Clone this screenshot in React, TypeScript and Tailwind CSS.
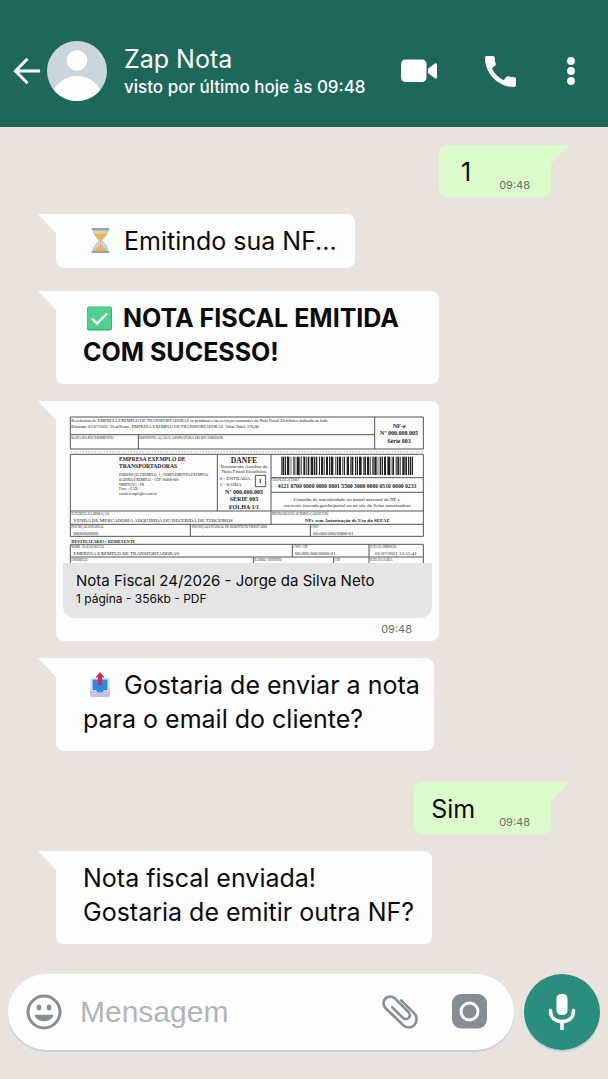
import type { ReactNode } from 'react';

// ---------- icons ----------

function BackIcon() {
  return (
    <svg viewBox="0 0 28 28" className="h-7 w-7" fill="none" stroke="currentColor" strokeWidth="3">
      <path d="M27 14H3M14.5 1.8L2.5 14l12 12.2" />
    </svg>
  );
}

function Avatar() {
  return (
    <svg viewBox="0 0 60 60" className="h-15 w-15 shrink-0" aria-hidden="true">
      <defs>
        <clipPath id="avatar">
          <circle cx="30" cy="30" r="30" />
        </clipPath>
      </defs>
      <g clipPath="url(#avatar)">
        <rect width="60" height="60" fill="#cbd5dd" />
        <circle cx="30" cy="19.5" r="10.3" fill="#fff" />
        <circle cx="30" cy="62" r="27" fill="#fff" />
      </g>
    </svg>
  );
}

function VideoIcon() {
  return (
    <svg viewBox="0 0 36 24" className="h-6 w-9" fill="currentColor">
      <rect x="0" y="0.5" width="25.500" height="22.500" rx="4.500" />
      <path d="M27 9.800 33.500 4.700Q36 3.300 36 5.800V18Q36 20.500 33.500 18.900L27 14Z" />
    </svg>
  );
}

function PhoneIcon() {
  return (
    <svg viewBox="3 3 18 18" className="h-[31px] w-[31px]" fill="currentColor">
      <path d="M20.010 15.380c-1.230 0-2.420-.2-3.530-.56-.35-.12-.74-.03-1.010.24l-1.570 1.970c-2.830-1.350-5.480-3.900-6.890-6.830l1.950-1.660c.27-.28.35-.67.24-1.020-.37-1.110-.56-2.300-.56-3.530 0-.54-.45-.99-.99-.99H4.190C3.650 3 3 3.240 3 3.990 3 13.280 10.730 21 20.010 21c.71 0 .99-.63.99-1.180v-3.450c0-.54-.45-.99-.99-.99z" />
    </svg>
  );
}

function DotsIcon() {
  return (
    <svg viewBox="0 0 8 28" className="h-7 w-2" fill="currentColor">
      <circle cx="4" cy="4" r="3.9" />
      <circle cx="4" cy="14" r="3.9" />
      <circle cx="4" cy="24" r="3.9" />
    </svg>
  );
}

function SmileIcon() {
  return (
    <svg viewBox="0 0 36 36" className="h-9 w-9" fill="#848e94">
      <circle cx="18" cy="18" r="16" fill="none" stroke="#848e94" strokeWidth="3" />
      <ellipse cx="13" cy="13.500" rx="2.300" ry="3" />
      <ellipse cx="23" cy="13.500" rx="2.300" ry="3" />
      <path d="M8.500 20.800H27.500C26.500 24.800 22.700 27.200 18 27.200S9.500 24.800 8.500 20.800Z" />
    </svg>
  );
}

function ClipIcon() {
  return (
    <svg viewBox="0 0 36 34" className="h-[34px] w-9" fill="none" stroke="#848e94" strokeWidth="2.600" strokeLinecap="round" strokeLinejoin="round">
      <path d="M19.200 5.300 32.300 18.400C35.300 21.400 35.300 27 32.300 30.200 29.300 33.200 24.200 33.200 21.200 30.200L3.600 13.200C.8 10.500.8 6.200 3.400 3.500 6 .8 10.200.8 12.800 3.400L26.300 16.800C28.200 18.700 28.200 21.300 26.600 22.900 24.900 24.500 22.500 24.500 20.700 22.700L10.300 12.400" />
    </svg>
  );
}

function CameraIcon() {
  return (
    <svg viewBox="0 0 35 37" className="h-[37px] w-[35px]">
      <rect width="35" height="34.500" rx="9" fill="#848e94" />
      <circle cx="17.500" cy="17.500" r="8.500" fill="none" stroke="#fff" strokeWidth="3" />
    </svg>
  );
}

function MicIcon() {
  return (
    <svg viewBox="0 0 28 36" className="h-9 w-7" fill="none" stroke="#fff" strokeWidth="3.600" strokeLinecap="round">
      <rect x="8.500" y="0" width="11" height="21" rx="4.500" fill="#fff" stroke="none" />
      <path d="M2.500 16.500C2.500 24 7.500 27.500 14 27.500S25.500 24 25.500 16.500M14 28V34.500" />
    </svg>
  );
}

// ---------- emoji ----------

function Hourglass() {
  return (
    <svg viewBox="0 0 27 27" className="mr-[10px] ml-1 inline-block h-[27px] w-[27px] align-[-4px]">
      <path d="M6.500 3H20.500C20.500 9 16 11 15 13.500 16 16 20.500 18 20.500 24H6.500C6.500 18 11 16 12 13.500 11 11 6.500 9 6.500 3Z" fill="#b7dcf6" stroke="#8fb8dc" strokeWidth=".8" />
      <path d="M7.500 5.500H19.500C18.800 9.500 15 11 14 13.500H13C12 11 8.200 9.500 7.500 5.500Z" fill="#f3b544" />
      <ellipse cx="13.500" cy="5.600" rx="6" ry="1.300" fill="#ffd66b" />
      <path d="M13 13H14V20H13Z" fill="#f5ab30" />
      <path d="M7.500 24C8.500 20.500 11 19 13.500 18.500 16 19 18.500 20.500 19.500 24Z" fill="#f7ae62" />
      <rect x="4.500" y="1" width="18" height="2.200" rx="1" fill="#97a1ae" />
      <rect x="4.500" y="23.800" width="18" height="2.200" rx="1" fill="#97a1ae" />
    </svg>
  );
}

function CheckMark() {
  return (
    <svg viewBox="0 0 27 27" className="mr-[9px] ml-1 inline-block h-[27px] w-[27px] align-[-5px]">
      <rect x="0" y="1.500" width="25" height="24" rx="2" fill="#35b273" />
      <rect x="0.500" y="2" width="23.500" height="22" rx="2" fill="#51d28c" />
      <path d="M5 13.500 10 18.500 20 8.500" fill="none" stroke="#fff" strokeWidth="2.400" />
    </svg>
  );
}

function Outbox() {
  return (
    <svg viewBox="0 0 27 27" className="mr-[10px] ml-1 inline-block h-[27px] w-[27px] align-[-4px]">
      <path d="M5.500 7H20.500L23 20V24.500Q23 26 21.500 26H4.500Q3 26 3 24.500V20Z" fill="#c3b4dd" />
      <rect x="3.500" y="6.500" width="19" height="16" rx="2" fill="#d7e6f2" />
      <path d="M5.500 8.500H20.500V19H17L15.500 21.500H10.500L9 19H5.500Z" fill="#3288dc" />
      <path d="M3 19.500H9L10.500 22H15.500L17 19.500H23V24.500Q23 26 21.500 26H4.500Q3 26 3 24.500Z" fill="#cbbce2" />
      <path d="M13 1 17.500 6.500H15V14H11V6.500H8.500Z" fill="#d62457" />
    </svg>
  );
}

// ---------- invoice thumbnail ----------

const bars = [
  2, 2, 6, 2, 3, 3, 7, 4, 2, 6, 4, 3, 2, 2, 8, 3, 3, 5, 6, 2, 2, 3, 5, 4, 8, 2, 3, 2, 5, 5, 3, 3, 7, 2, 2, 4,
  6, 3, 3, 2, 8, 5, 2, 3, 5, 2, 6, 4, 3, 2, 3, 5, 7, 3, 2, 2, 6, 5, 4, 2, 3, 3, 8, 4, 2, 2, 5, 3, 6, 2, 3, 5,
  4, 2, 7, 3, 2, 4, 5, 2, 3, 3, 6, 4, 8, 2, 2, 3, 5, 5, 3, 2, 6, 3, 2, 4, 7, 2, 5, 3, 4, 2, 3, 2, 4,
];

function Barcode() {
  let x = 654;
  return (
    <g fill="#222">
      {bars.map((w, i) => {
        const left = x;
        x += w;
        return i % 2 === 0 && x < 1052 ? <rect key={i} x={left} y="131" width={w} height="55" /> : null;
      })}
    </g>
  );
}

function Danfe() {
  return (
    <svg viewBox="0 0 1107 450" className="block w-full font-['Liberation_Serif',serif]" fill="#222">
      <g fill="none" stroke="#555" strokeWidth="3">
        <path d="M22 12H1081V108H22ZM22 65H935M935 12V108M226 65V108" />
        <path d="M22 117H1081" strokeDasharray="5 4" strokeWidth="2" stroke="#999" />
        <path d="M22 124H1081V370H22ZM22 294H1081M22 334H1081M463 124V294M624 124V334M624 194H1081M624 238H1081M382 334V370M742 334V370" />
        <path d="M22 450V394H1081V450M22 432H1081M688 394V432M918 394V450M571 432V450M812 432V450" />
        <path d="M577 187H608V221H577Z" />
      </g>
      <Barcode />

      <g fontSize="13">
        <text x="25" y="27">Recebemos de EMPRESA EXEMPLO DE TRANSPORTADORAS os produtos e/ou serviços constantes da Nota Fiscal Eletrônica indicada ao lado.</text>
        <text x="25" y="44">Emissão: 01/07/2021 &nbsp;Dest/Reme: EMPRESA EXEMPLO DE TRANSPORTADORAS &nbsp;Valor Total: 570,00</text>
      </g>
      <g fontSize="11">
        <text x="25" y="79">DATA DO RECEBIMENTO</text>
        <text x="229" y="79">IDENTIFICAÇÃO E ASSINATURA DO RECEBEDOR</text>
        <text x="168" y="190">ENDEREÇO EXEMPLO, 1, COMPLEMENTO EXEMPLO</text>
        <text x="168" y="204">BAIRRO EXEMPLO - CEP: 00000-000</text>
        <text x="168" y="218">IMBITUVA - PR</text>
        <text x="168" y="232">Fone: - FAX:</text>
        <text x="168" y="246">emailexemplo@ct.com.br</text>
      </g>

      <g fontSize="18" fontWeight="700" textAnchor="middle">
        <text x="1008" y="45">NF-e</text>
        <text x="1008" y="67">Nº 000.000.005</text>
        <text x="1008" y="89">Série 003</text>
      </g>
      <g fontSize="17" fontWeight="700">
        <text x="168" y="143">EMPRESA EXEMPLO DE</text>
        <text x="168" y="165">TRANSPORTADORAS</text>
      </g>

      <text x="543" y="150" fontSize="23" fontWeight="700" textAnchor="middle">DANFE</text>
      <g fontSize="15">
        <text x="543" y="164" textAnchor="middle">Documento Auxiliar da</text>
        <text x="543" y="179" textAnchor="middle">Nota Fiscal Eletrônica</text>
        <text x="470" y="200">0 - ENTRADA</text>
        <text x="470" y="219">1 - SAÍDA</text>
      </g>
      <g fontSize="18" fontWeight="700" textAnchor="middle">
        <text x="592" y="210">1</text>
        <text x="543" y="242">Nº 000.000.005</text>
        <text x="543" y="265">SÉRIE 003</text>
        <text x="543" y="288">FOLHA 1/1</text>
      </g>

      <text x="852" y="226" fontSize="17" fontWeight="700" textAnchor="middle">4121 0700 0000 0000 0001 5500 3000 0000 0510 0000 0233</text>
      <g fontSize="15" textAnchor="middle">
        <text x="852" y="263">Consulta de autenticidade no portal nacional da NF-e</text>
        <text x="852" y="281">www.nfe.fazenda.gov.br/portal ou no site da Sefaz autorizadora</text>
      </g>
      <text x="853" y="326" fontSize="15" fontWeight="700" textAnchor="middle">NFe sem Autorização de Uso da SEFAZ</text>

      <g fontSize="9">
        <text x="626" y="205">CHAVE DE ACESSO</text>
        <text x="25" y="307">NATUREZA DA OPERAÇÃO</text>
        <text x="626" y="307">PROTOCOLO DE AUTORIZAÇÃO DE USO</text>
        <text x="25" y="345">INSCRIÇÃO ESTADUAL</text>
        <text x="386" y="345">INSCRIÇÃO ESTADUAL DO SUBSTITUTO TRIBUTÁRIO</text>
        <text x="745" y="345">CNPJ</text>
        <text x="25" y="406">NOME / RAZÃO SOCIAL</text>
        <text x="691" y="406">CNPJ / CPF</text>
        <text x="921" y="406">DATA DA EMISSÃO</text>
        <text x="25" y="445">ENDEREÇO</text>
        <text x="574" y="445">BAIRRO / DISTRITO</text>
        <text x="815" y="445">CEP</text>
        <text x="921" y="445">DATA DA SAÍDA</text>
      </g>
      <g fontSize="15">
        <text x="31" y="326">VENDA DE MERCADORIA ADQUIRIDA OU RECEBIDA DE TERCEIROS</text>
        <text x="31" y="365">0000000000</text>
        <text x="750" y="365">00.000.000/0000-01</text>
        <text x="31" y="427">EMPRESA EXEMPLO DE TRANSPORTADORAS</text>
        <text x="696" y="427">00.000.000/0000-01</text>
        <text x="936" y="427">01/07/2021 13:55:41</text>
      </g>
      <text x="25" y="389" fontSize="13" fontWeight="700">DESTINATÁRIO / REMETENTE</text>
    </svg>
  );
}

// ---------- bubbles ----------

function Received({ children, className = '' }: { children: ReactNode; className?: string }) {
  return (
    <div className={`relative self-start rounded-lg rounded-tl-none bg-[#fdfdfd] ${className}`}>
      <svg viewBox="0 0 19 19" className="absolute top-0 -left-[18px] h-[19px] w-[19px]" fill="#fdfdfd">
        <path d="M0 0H19V19H18Z" />
      </svg>
      {children}
    </div>
  );
}

function Sent({ children, className = '' }: { children: string; className?: string }) {
  return (
    <div className={`relative flex items-end self-end rounded-lg rounded-tr-none bg-[#dcfbcb] pt-[10px] pr-[21px] pb-1 ${className}`}>
      <svg viewBox="0 0 19 19" className="absolute top-0 -right-[18px] h-[19px] w-[19px]" fill="#dcfbcb">
        <path d="M19 0H0V19H1Z" />
      </svg>
      <p className="pb-1 text-[25px] leading-[34px]">{children}</p>
      <Time />
    </div>
  );
}

function Time() {
  return <time className="text-[11px] leading-4 text-[#6b706b]">09:48</time>;
}

export default function App() {
  return (
    <div className="flex min-h-screen flex-col bg-[#eae3dc] font-['Inter',sans-serif] text-[#0b0b0b]">
      <header className="flex items-center bg-[#1d685b] pt-[41px] pr-[33px] pb-[26px] pl-[13px] text-white">
        <button type="button" aria-label="Voltar" className="mr-[6px]">
          <BackIcon />
        </button>
        <Avatar />
        <div className="ml-[17px] flex-1">
          <h1 className="text-[25px] leading-8">Zap Nota</h1>
          <p className="text-[17px] leading-6 font-medium">visto por último hoje às 09:48</p>
        </div>
        <div className="flex items-center">
          <button type="button" aria-label="Chamada de vídeo" className="mr-12">
            <VideoIcon />
          </button>
          <button type="button" aria-label="Ligar" className="mr-[51px]">
            <PhoneIcon />
          </button>
          <button type="button" aria-label="Mais opções">
            <DotsIcon />
          </button>
        </div>
      </header>

      <main className="flex flex-1 flex-col gap-[17px] pt-[18px] pr-[57px] pl-14 text-[25px] leading-[34px]">
        <Sent className="gap-7 pl-[22px]">1</Sent>

        <Received className="pt-[10px] pr-[18px] pb-[10px] pl-[27px]">
          <p>
            <Hourglass />
            Emitindo sua NF...
          </p>
        </Received>

        <Received className="mt-[6px] pt-[10px] pr-10 pb-[15px] pl-[27px]">
          <p className="font-bold">
            <CheckMark />
            NOTA FISCAL EMITIDA
            <br />
            COM SUCESSO!
          </p>
        </Received>

        <Received className="w-full max-w-[383px] px-[7px] pt-3 pb-1">
          <Danfe />
          <div className="rounded-b-xl bg-[#e5e5e5] px-[13px] pt-2 pb-[11px]">
            <p className="text-[15px] leading-5">Nota Fiscal 24/2026 - Jorge da Silva Neto</p>
            <p className="text-xs leading-4">1 página - 356kb - PDF</p>
          </div>
          <div className="flex justify-end pt-[3px] pr-5">
            <Time />
          </div>
        </Received>

        <Received className="pt-[10px] pr-[14px] pb-[15px] pl-[27px]">
          <p>
            <Outbox />
            Gostaria de enviar a nota
            <br />
            para o email do cliente?
          </p>
        </Received>

        <Sent className="mt-[14px] gap-6 pl-[17px]">Sim</Sent>

        <Received className="pt-[10px] pr-[18px] pb-[15px] pl-[27px]">
          <p>
            Nota fiscal enviada!
            <br />
            Gostaria de emitir outra NF?
          </p>
        </Received>
      </main>

      <footer className="flex gap-[10px] px-2 pt-7 pb-[29px]">
        <div className="flex h-[76px] min-w-0 flex-1 items-center rounded-full bg-[#fefefe] pr-[27px] pl-[18px] shadow-[0_2px_0_#c3d3da]">
          <button type="button" aria-label="Emoji">
            <SmileIcon />
          </button>
          <input
            type="text"
            aria-label="Mensagem"
            placeholder="Mensagem"
            className="ml-[18px] min-w-0 flex-1 bg-transparent font-['Liberation_Sans',sans-serif] text-[30px] leading-9 outline-none placeholder:text-[#b0b5b8]"
          />
          <button type="button" aria-label="Anexar" className="mr-[34px]">
            <ClipIcon />
          </button>
          <button type="button" aria-label="Câmera">
            <CameraIcon />
          </button>
        </div>
        <button
          type="button"
          aria-label="Gravar áudio"
          className="flex h-[76px] w-[76px] shrink-0 items-center justify-center rounded-full bg-[#2c8e7f] shadow-[0_2px_0_#c3d3da]"
        >
          <MicIcon />
        </button>
      </footer>
    </div>
  );
}
